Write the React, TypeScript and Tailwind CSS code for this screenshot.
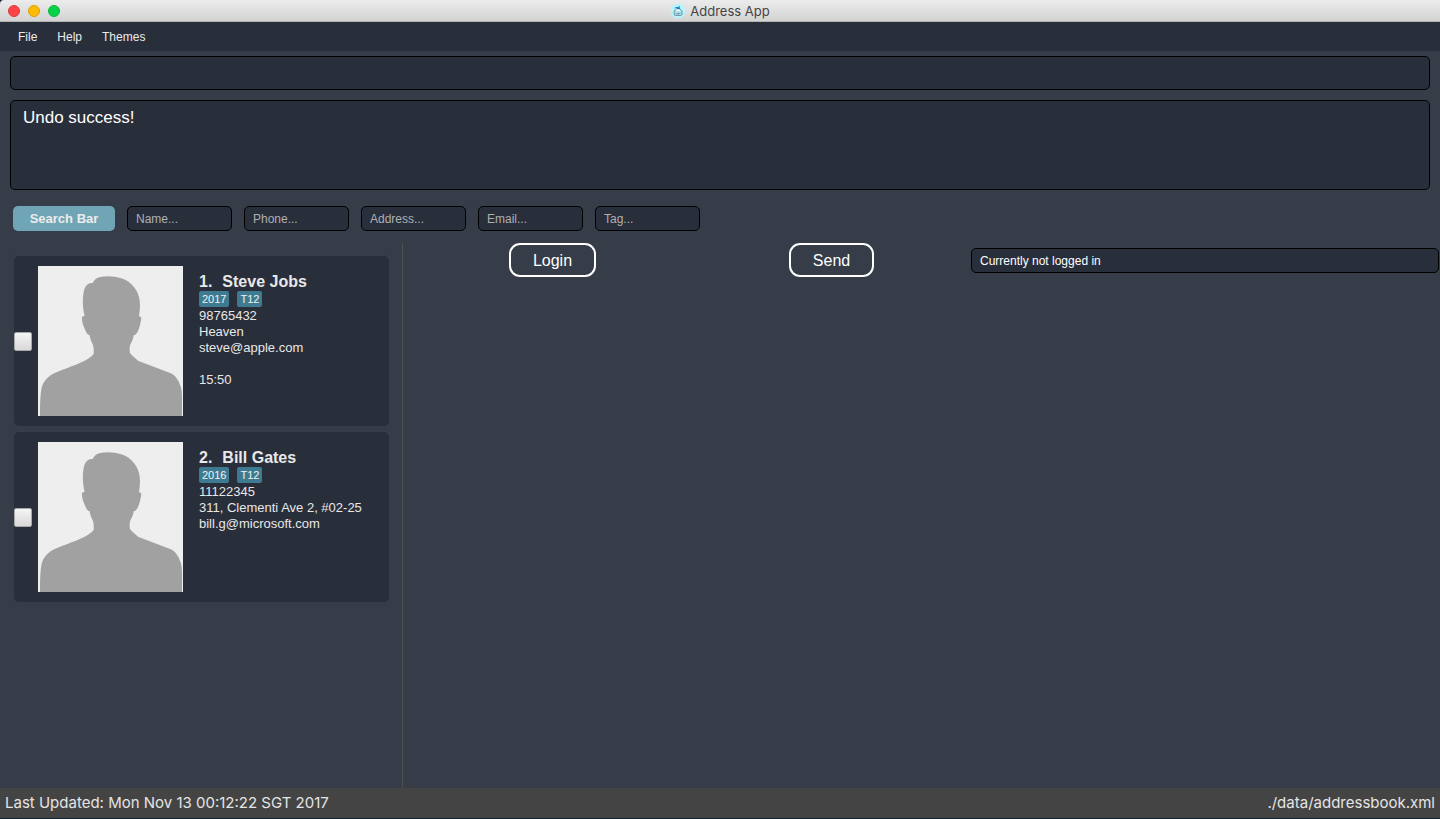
import React from "react";

type Person = {
  id: number;
  name: string;
  tags: string[];
  phone: string;
  address: string;
  email: string;
  access?: string;
};

const people: Person[] = [
  {
    id: 1,
    name: "Steve Jobs",
    tags: ["2017", "T12"],
    phone: "98765432",
    address: "Heaven",
    email: "steve@apple.com",
    access: "15:50",
  },
  {
    id: 2,
    name: "Bill Gates",
    tags: ["2016", "T12"],
    phone: "11122345",
    address: "311, Clementi Ave 2, #02-25",
    email: "bill.g@microsoft.com",
  },
];

const searchFields = ["Name", "Phone", "Address", "Email", "Tag"];

function AppIcon() {
  return (
    <svg viewBox="0 0 16 16" className="size-4" aria-hidden="true">
      <circle cx="8" cy="8" r="7.5" fill="#b9f3fb" />
      <rect x="4.2" y="7.4" width="7.8" height="5" rx="1.2" fill="#a9dbe6" stroke="#5b8796" strokeWidth="0.9" />
      <path d="M4.6 8.2 L6.4 5.6 H10 L11.6 8.2" fill="#e6fbff" stroke="#5b8796" strokeWidth="0.8" />
      <path d="M6.6 10.6 H9.6" stroke="#5b8796" strokeWidth="0.9" />
      <path d="M4 5.6 C5 3.8 7 3.6 8 4.2 L9.4 2.6 L10 6.2 L6.6 6 L7.2 5.2 C6 4.8 5 5 4 5.6Z" fill="#1b7fd0" />
    </svg>
  );
}

function TitleBar() {
  return (
    <header className="relative flex h-[22px] shrink-0 items-center justify-center rounded-tl-[4px] border-b border-[#b4b4b4] bg-linear-to-b from-[#ececec] to-[#d3d3d3]">
      <div className="absolute left-2 top-[5px] flex gap-2">
        <button type="button" aria-label="Close" className="size-3 rounded-full border border-[#e0383a] bg-[#fc4447]" />
        <button type="button" aria-label="Minimize" className="size-3 rounded-full border border-[#e0a000] bg-[#fdbb05]" />
        <button type="button" aria-label="Zoom" className="size-3 rounded-full border border-[#0cb83a] bg-[#05d347]" />
      </div>
      <div className="flex items-center gap-1">
        <AppIcon />
        <h1 className="pt-px font-['Inter',sans-serif] text-[13px] leading-4 text-[#454545]">Address App</h1>
      </div>
    </header>
  );
}

function PersonCard({ person }: { person: Person }) {
  const nameId = `person-${person.id}`;
  return (
    <li className="flex h-44 rounded-[8px] border-[3px] border-[#363c48] bg-[#292e3b] text-[#e8e8e8]">
      <input
        type="checkbox"
        aria-labelledby={nameId}
        className="h-[19px] w-[18px] shrink-0 self-center appearance-none rounded-[2px] border border-[#a9a9a9] bg-linear-to-b from-[#f4f4f4] to-[#d9d9d9] checked:from-[#3f7a90] checked:to-[#3f7a90]"
      />
      <svg viewBox="0 0 435 450" className="mt-[10px] ml-[6px] h-[150px] w-[145px] shrink-0 bg-[#eeeeee]" role="img" aria-label="Profile photo placeholder">
        <path
          fill="#a1a1a1"
          d="M6 450 C6 420 6 395 10 370 C14 350 24 337 40 326 C60 315 105 302 143 283 C153 276 161 271 167 264 C168 250 167 238 160 226 C157 220 156 214 155 208 C147 206 144 198 139 186 C134 174 131 165 132 152 L140 149 C133 125 133 90 139 70 C143 57 152 51 165 50 C168 42 175 36 184 34 C205 28 232 31 250 37 C272 44 290 60 299 82 C308 104 307 125 303 149 L310 155 C308 172 304 187 298 199 C295 205 291 207 287 208 C286 220 281 228 276 238 C274 248 275 256 276 262 C284 270 291 277 300 284 L402 323 C415 331 425 348 430 368 C433 385 432 400 432 450Z"
        />
      </svg>
      <div className="mt-[17px] ml-4 min-w-0 text-[13px] leading-4">
        <h2 id={nameId} className="flex gap-[10px] text-[16px] leading-[18px] font-bold">
          <span>{person.id}.</span>
          <span>{person.name}</span>
        </h2>
        <ul className="mb-px flex gap-2">
          {person.tags.map((tag) => (
            <li key={tag} className="rounded-[2px] bg-[#3e7b91] px-[3px] text-[11px] leading-4 text-[#f2f2f2]">
              {tag}
            </li>
          ))}
        </ul>
        <p>{person.phone}</p>
        <p>{person.address}</p>
        <p>{person.email}</p>
        {person.access && <p className="mt-4">{person.access}</p>}
      </div>
    </li>
  );
}

export default function App() {
  return (
    <div className="flex min-h-screen flex-col bg-[#0c2230] font-['Liberation_Sans',Arial,sans-serif]">
      <TitleBar />
      <nav className="flex h-[29px] shrink-0 items-center bg-[#292e3b] px-2 text-[12px] text-[#ececec]">
        {["File", "Help", "Themes"].map((item) => (
          <button key={item} type="button" className="px-[10px]">
            {item}
          </button>
        ))}
      </nav>

      <main className="flex flex-1 flex-col bg-[#363c48]">
        <div className="flex flex-col gap-[10px] px-[10px] pt-[5px]">
          <input
            aria-label="Command"
            className="h-[34px] rounded-[5px] border border-black bg-[#292e3b] px-3 text-[17px] text-white outline-none"
          />
          <textarea
            aria-label="Result"
            readOnly
            value="Undo success!"
            className="h-[90px] resize-none rounded-[5px] border border-black bg-[#292e3b] px-3 py-[7px] text-[17px] leading-5 text-white outline-none"
          />
        </div>

        <form className="flex gap-3 px-[13px] pt-4 pb-3" onSubmit={(e) => e.preventDefault()}>
          <button type="submit" className="h-[25px] w-[102px] rounded-[5px] bg-[#70a5b5] pt-px text-[13px] font-bold text-[#ececec]">
            Search Bar
          </button>
          {searchFields.map((field) => (
            <input
              key={field}
              aria-label={field}
              placeholder={`${field}...`}
              className="h-[25px] w-[105px] rounded-[5px] border border-black bg-[#292e3b] px-2 text-[12px] text-white outline-none placeholder:text-[#aeb0b2]"
            />
          ))}
        </form>

        <div className="flex flex-1">
          <ul className="w-[403px] shrink-0 border-r border-[#4f4f50] py-[10px] pr-[10px] pl-[11px]">
            {people.map((person) => (
              <PersonCard key={person.id} person={person} />
            ))}
          </ul>
          <section className="grid flex-1 grid-cols-[1fr_1fr_468px] items-center self-start pr-px pl-[10px]">
            {["Login", "Send"].map((label) => (
              <button
                key={label}
                type="button"
                className="h-[34px] justify-self-center rounded-[11px] border-2 border-white px-[22px] pt-px text-[16px] text-white"
              >
                {label}
              </button>
            ))}
            <input
              aria-label="Login status"
              readOnly
              value="Currently not logged in"
              className="h-[25px] w-full rounded-[5px] border border-black bg-[#292e3b] px-2 pt-px text-[12px] text-white outline-none"
            />
          </section>
        </div>
      </main>

      <footer className="mb-px flex h-[30px] shrink-0 items-center justify-between bg-[#444444] px-[5px] pt-px font-['Inter',sans-serif] text-[15px] text-[#e4e4e4]">
        <span>Last Updated: Mon Nov 13 00:12:22 SGT 2017</span>
        <span>./data/addressbook.xml</span>
      </footer>
    </div>
  );
}
